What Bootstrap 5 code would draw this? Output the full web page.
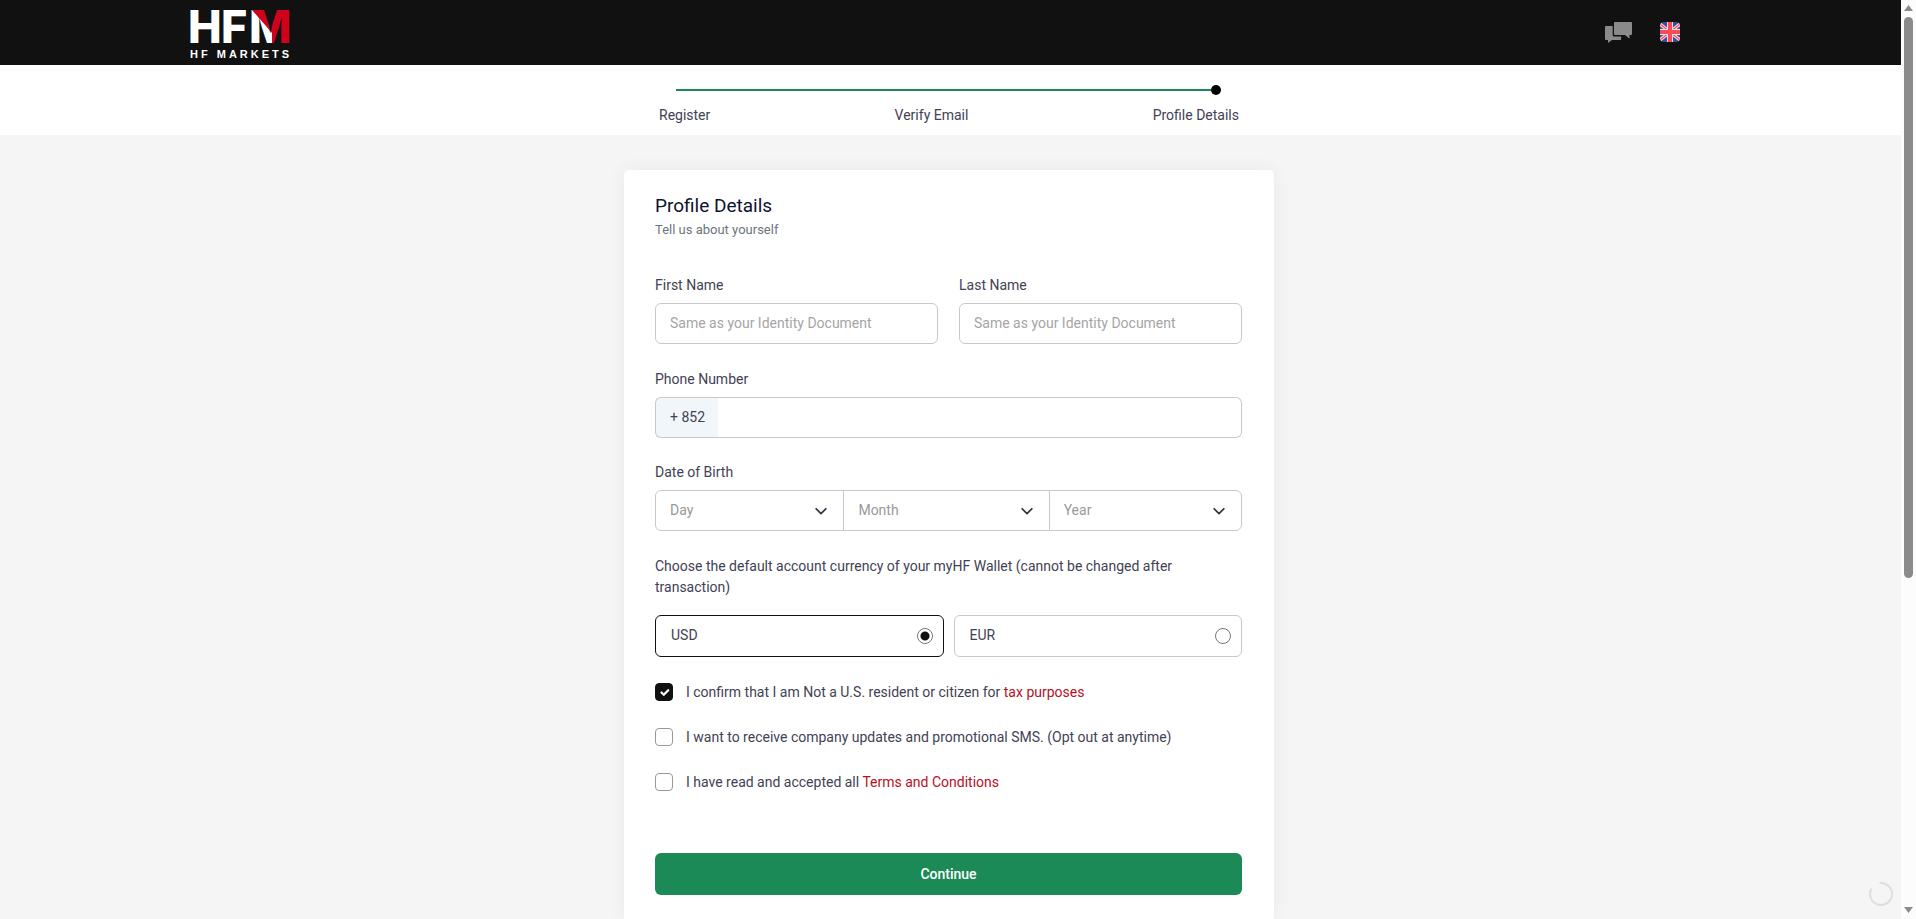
<!DOCTYPE html>
<html lang="en">
<head>
<meta charset="utf-8">
<meta name="viewport" content="width=device-width, initial-scale=1">
<title>HFM - Profile Details</title>
<link href="https://cdn.jsdelivr.net/npm/bootstrap@5.3.0/dist/css/bootstrap.min.css" rel="stylesheet">
<style>
  :root { --ink: #3f4254; --line: #c9c9c9; --green: #1b8a56; --red: #b8101d; }
  body { font-family: Roboto, "Liberation Sans", sans-serif; font-size: 14px; line-height: 21px; color: var(--ink); background: #f5f5f5; }
  svg { display: block; overflow: visible; }
  .page { min-width: 0; }
  .topbar { background: #111; height: 65px; padding: 0 10%; }
  .topbar .tools { gap: 28px; padding-right: 31px; padding-bottom: 1px; }
  .steps { background: #fff; height: 70px; padding-top: 20px; padding-right: 3px; }
  .steps-inner { width: 100%; max-width: 580px; }
  .track { margin: 0 18px 10px 17px; }
  .track-line { height: 2px; background: var(--green); }
  .track-dot { width: 10px; height: 10px; border-radius: 50%; background: #000; }
  .content { padding: 35px 3px 0 0; }
  .panel { width: 100%; max-width: 650px; background: #fff; border-radius: 5px 5px 0 0; padding: 24px 32px 24px 31px; box-shadow: 0 0 20px rgba(0,0,0,.05); }
  h1 { font-size: 19px; line-height: 24px; font-weight: 400; color: #0d1230; margin: 0; }
  .sub { font-size: 13px; color: #6c757d; margin: 1px 0 35px; }
  .form-label { margin-bottom: 7px; }
  .names, .dob { margin-bottom: 25px; }
  .form-control, .form-select, .input-group-text { height: 41px; font-size: 14px; border-color: var(--line); border-radius: 6px; padding-left: 14px; color: var(--ink); }
  .form-control { padding-bottom: 8px; }
  .form-control::placeholder { color: #a5a5a5; }
  .names { --bs-gutter-x: 21px; }
  .input-group-text { background: #f1f6fa; border-right: 0; padding-right: 14px; }
  .phone { border-left: 0; }
  .form-select { color: #999; padding-right: 36px; background-size: 14px; background-position: right 15px center;
    background-image: url("data:image/svg+xml,%3csvg xmlns='http://www.w3.org/2000/svg' viewBox='0 0 14 14'%3e%3cpath fill='none' stroke='%23343a46' stroke-width='1.8' stroke-linecap='round' stroke-linejoin='round' d='M2.2 4.8 7 9.6l4.800-4.800'/%3e%3c/svg%3e"); }
  .dob-day { flex: 139 1 0 !important; }
  .dob-month { flex: 156 1 0 !important; }
  .dob-year { flex: 143 1 0 !important; }
  .wallet { border: 0; margin: 0 0 24px; padding: 0; }
  .wallet legend { font-size: 14px; line-height: 21px; margin-bottom: 17px; float: none; }
  .choices { gap: 10px; }
  .choice { height: 42px; border: 1px solid var(--line); border-radius: 6px; padding: 0 10px 1px 15px; cursor: pointer; }
  .choice:has(:checked) { border-color: #111; }
  .choice .form-check-input { width: 16px; height: 16px; margin: 0; border-color: #777; }
  .choice .form-check-input:checked { background-color: #fff; background-image: radial-gradient(circle, #111 0 4px, transparent 5px); }
  .agree .form-check-input { width: 18px; height: 18px; margin: 0; border-color: #999; border-radius: 4px; flex: none; }
  .agree .form-check-input:checked { background-color: #111; border-color: #111; background-size: 15px; }
  .agree label { padding-top: 1px; }
  .agree a { color: var(--red); text-decoration: none; }
  .agree { gap: 13px; }
  .agrees { gap: 23px; margin-bottom: 60px; }
  .btn-go { height: 42px; background: var(--green); border: 0; border-radius: 6px; color: #fff; font-size: 14px; font-weight: 500; }
  .loader { position: fixed; right: 23px; bottom: 13px; }
  .scroller { width: 15px; background: #fcfcfc; padding: 5px 0 6px; gap: 6px; }
  .thumb { width: 9px; height: 61vh; border-radius: 5px; background: #8b8b8b; }
</style>
</head>
<body class="d-flex min-vh-100">
<div class="page flex-grow-1 d-flex flex-column">
  <header class="topbar d-flex align-items-center justify-content-between">
    <a href="#" aria-label="HFM HF Markets">
      <svg width="104" height="56" viewBox="0 0 104 56" role="img">
        <defs>
          <pattern id="fold" patternUnits="userSpaceOnUse" width="110" height="56">
            <rect width="110" height="56" fill="#d0021b"/>
            <path d="M50 5H62L82 28v17H50z" fill="#fff"/>
          </pattern>
        </defs>
        <g font-family="Inter, sans-serif" font-weight="800" font-size="45" fill="#fff">
          <text x="-2" y="38">H</text>
          <text x="31" y="38">F</text>
          <text x="59" y="38" fill="url(#fold)">M</text>
        </g>
        <text x="0" y="53" font-family="Liberation Sans, sans-serif" font-weight="700" font-size="11" letter-spacing="3" fill="#fff">HF MARKETS</text>
      </svg>
    </a>
    <div class="tools d-flex align-items-center">
      <a href="#" aria-label="Live chat">
        <svg width="27" height="21" viewBox="0 0 27 21" fill="#8a8a8a"><path d="M10 0h16q1 0 1 1v11q0 1-1 1h-1.500v3.800L20 13H10q-1 0-1-1V1q0-1 1-1z"/><path d="M1 4h6.700v9q0 1.500 1.500 1.500h7V17q0 1-1 1H7l-4 3v-3H1q-1 0-1-1V5q0-1 1-1z"/></svg>
      </a>
      <a href="#" aria-label="English">
        <svg width="20" height="20" viewBox="0 0 20 20"><defs><clipPath id="r"><rect width="20" height="20" rx="4"/></clipPath></defs><g clip-path="url(#r)"><path fill="#41479b" d="M0 0h20v20H0z"/><path d="M0 2l20 16M20 2L0 18" stroke="#e8dfe6" stroke-width="3.500"/><path d="M0 2l20 16M20 2L0 18" stroke="#ff4b55" stroke-width="1.200"/><path d="M10 0v20M0 10h20" stroke="#e8dfe6" stroke-width="6"/><path d="M10 0v20M0 10h20" stroke="#f74c58" stroke-width="4"/></g></svg>
      </a>
    </div>
  </header>

  <nav class="steps d-flex justify-content-center" aria-label="Registration progress">
    <div class="steps-inner">
      <div class="track d-flex align-items-center">
        <div class="track-line flex-grow-1"></div>
        <div class="track-dot"></div>
      </div>
      <div class="d-flex justify-content-between">
        <span>Register</span><span>Verify Email</span><span>Profile Details</span>
      </div>
    </div>
  </nav>

  <main class="content flex-grow-1 d-flex justify-content-center">
    <form class="panel">
      <h1>Profile Details</h1>
      <p class="sub">Tell us about yourself</p>

      <div class="row names">
        <div class="col-6">
          <label class="form-label d-block" for="first">First Name</label>
          <input class="form-control" id="first" type="text" placeholder="Same as your Identity Document">
        </div>
        <div class="col-6">
          <label class="form-label d-block" for="last">Last Name</label>
          <input class="form-control" id="last" type="text" placeholder="Same as your Identity Document">
        </div>
      </div>

      <div class="mb-4">
        <label class="form-label d-block" for="phone">Phone Number</label>
        <div class="input-group">
          <span class="input-group-text">+ 852</span>
          <input class="form-control phone" id="phone" type="tel">
        </div>
      </div>

      <div class="dob">
        <label class="form-label d-block" for="day">Date of Birth</label>
        <div class="input-group">
          <select class="form-select dob-day" id="day"><option>Day</option></select>
          <select class="form-select dob-month" aria-label="Month"><option>Month</option></select>
          <select class="form-select dob-year" aria-label="Year"><option>Year</option></select>
        </div>
      </div>

      <fieldset class="wallet">
        <legend>Choose the default account currency of your myHF Wallet (cannot be changed after transaction)</legend>
        <div class="choices d-flex">
          <label class="choice flex-fill w-50 d-flex align-items-center justify-content-between">USD <input class="form-check-input" type="radio" name="currency" checked></label>
          <label class="choice flex-fill w-50 d-flex align-items-center justify-content-between">EUR <input class="form-check-input" type="radio" name="currency"></label>
        </div>
      </fieldset>

      <div class="agrees d-flex flex-column">
        <div class="agree d-flex align-items-center">
          <input class="form-check-input" type="checkbox" id="tax" checked>
          <label for="tax">I confirm that I am Not a U.S. resident or citizen for <a href="#">tax purposes</a></label>
        </div>
        <div class="agree d-flex align-items-center">
          <input class="form-check-input" type="checkbox" id="sms">
          <label for="sms">I want to receive company updates and promotional SMS. (Opt out at anytime)</label>
        </div>
        <div class="agree d-flex align-items-center">
          <input class="form-check-input" type="checkbox" id="terms">
          <label for="terms">I have read and accepted all <a href="#">Terms and Conditions</a></label>
        </div>
      </div>

      <button class="btn btn-go w-100" type="submit">Continue</button>
    </form>
  </main>
</div>

<div class="scroller flex-shrink-0 d-flex flex-column align-items-center" aria-hidden="true">
  <svg width="9" height="6" viewBox="0 0 9 6" fill="#8b8b8b"><path d="M4.500 0 9 6H0z"/></svg>
  <div class="thumb"></div>
  <svg class="mt-auto" width="9" height="6" viewBox="0 0 9 6" fill="#8b8b8b"><path d="M0 0h9L4.500 6z"/></svg>
</div>

<div class="loader" aria-hidden="true">
  <svg width="24" height="24" viewBox="0 0 24 24" fill="none" stroke="#dedede" stroke-width="2"><path d="M10.500 1.100A11 11 0 1 1 2.500 6.500"/></svg>
</div>
<script src="https://cdn.jsdelivr.net/npm/bootstrap@5.3.0/dist/js/bootstrap.bundle.min.js"></script>
</body>
</html>
